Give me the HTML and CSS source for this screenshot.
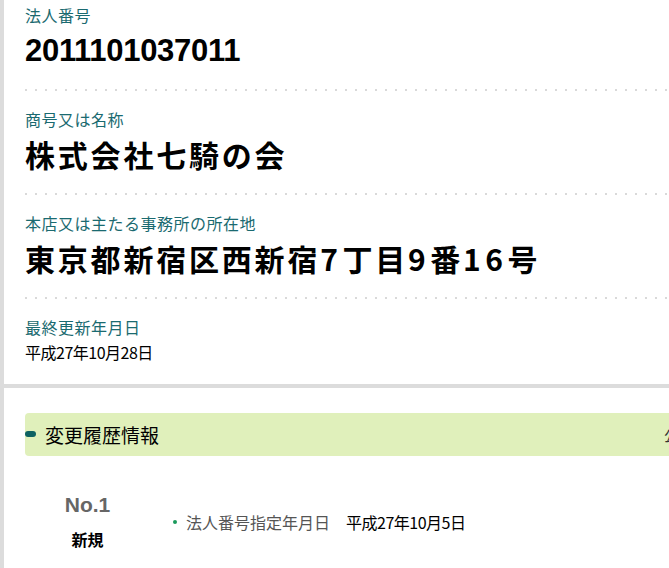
FILE: index.html
```html
<!DOCTYPE html>
<html lang="ja">
<head>
<meta charset="utf-8">
<title>法人番号</title>
<link rel="stylesheet" href="styles.css">
</head>
<body>
<div class="page">
  <section class="card">
    <div class="item">
      <div class="label">法人番号</div>
      <div class="value num">2011101037011</div>
    </div>
    <div class="item">
      <div class="label">商号又は名称</div>
      <div class="value">株式会社七騎の会</div>
    </div>
    <div class="item">
      <div class="label">本店又は主たる事務所の所在地</div>
      <div class="value">東京都新宿区西新宿<span class="d">7</span>丁目<span class="d">9</span>番<span class="d">16</span>号</div>
    </div>
    <div class="item">
      <div class="label">最終更新年月日</div>
      <div class="value small">平成27年10月28日</div>
    </div>
  </section>
  <section class="history">
    <div class="hhead">
      <h2 class="htitle">変更履歴情報</h2>
      <span class="hright">公表日</span>
    </div>
    <div class="entry">
      <div class="no-col">
        <div class="no">No.1</div>
        <div class="kind">新規</div>
      </div>
      <ul class="changes">
        <li><span class="ch-label">法人番号指定年月日</span><span class="ch-val">平成27年10月5日</span></li>
      </ul>
    </div>
  </section>
</div>
</body>
</html>
```
FILE: styles.css
```css
html, body {
  margin: 0;
  padding: 0;
  overflow: hidden;
  background: #fff;
}
body {
  font-family: "Noto Sans CJK JP", sans-serif;
  color: #000;
}
.page {
  width: 720px;
  min-height: 568px;
  border-left: 4px solid #dcdcdc;
}
.card {
  padding: 3px 0 0 21px;
  border-bottom: 4px solid #dcdcdc;
}
.item {
  padding: 16px 0 19px;
  background-image: linear-gradient(to right, #d9d9d9 2px, transparent 2px);
  background-size: 10px 2px;
  background-repeat: repeat-x;
  background-position: left bottom;
}
.item:first-child {
  padding-top: 0;
}
.item:last-child {
  background: none;
  padding-bottom: 20px;
}
.label {
  font-size: 16px;
  line-height: 25px;
  color: #1a6a70;
  letter-spacing: 0.5px;
}
.value {
  font-size: 30px;
  line-height: 44px;
  font-weight: 700;
  letter-spacing: 2.8px;
  white-space: nowrap;
}
.value .d {
  letter-spacing: 4.5px;
}
.value.num {
  font-family: "Liberation Sans", Arial, sans-serif;
  font-size: 31px;
  line-height: 42px;
  padding-top: 2px;
  letter-spacing: -0.3px;
}
.value.small {
  font-size: 16px;
  line-height: 24px;
  font-weight: 400;
  letter-spacing: -0.5px;
}
.history {
  padding: 25px 0 0 21px;
}
.hhead {
  position: relative;
  display: flex;
  align-items: center;
  height: 43px;
  padding: 0 18px 0 20px;
  background: #e0f0bb;
  border-radius: 4px;
}
.hhead::before {
  content: "";
  position: absolute;
  left: 0;
  top: 18px;
  width: 11px;
  height: 6px;
  border-radius: 3px;
  background: #0d6262;
}
.htitle {
  margin: 0;
  font-size: 19px;
  font-weight: 400;
  letter-spacing: 0;
}
.hright {
  margin-left: auto;
  font-size: 14px;
  color: #333;
}
.entry {
  display: flex;
  align-items: center;
  margin-top: 37px;
}
.no-col {
  width: 125px;
  text-align: center;
}
.no {
  font-family: "Liberation Sans", Arial, sans-serif;
  font-weight: 700;
  font-size: 21px;
  line-height: 24px;
  color: #666;
}
.kind {
  font-weight: 700;
  font-size: 16px;
  line-height: 24px;
  margin-top: 10px;
}
.changes {
  list-style: none;
  margin: 0;
  padding: 0 0 0 23px;
}
.changes li {
  display: flex;
  align-items: center;
  font-size: 16px;
  line-height: 24px;
}
.changes li::before {
  content: "";
  width: 4px;
  height: 4px;
  border-radius: 50%;
  background: #1a9a5c;
  margin-right: 9px;
}
.ch-label {
  color: #555;
}
.ch-val {
  margin-left: 16px;
  letter-spacing: -0.5px;
}
```
